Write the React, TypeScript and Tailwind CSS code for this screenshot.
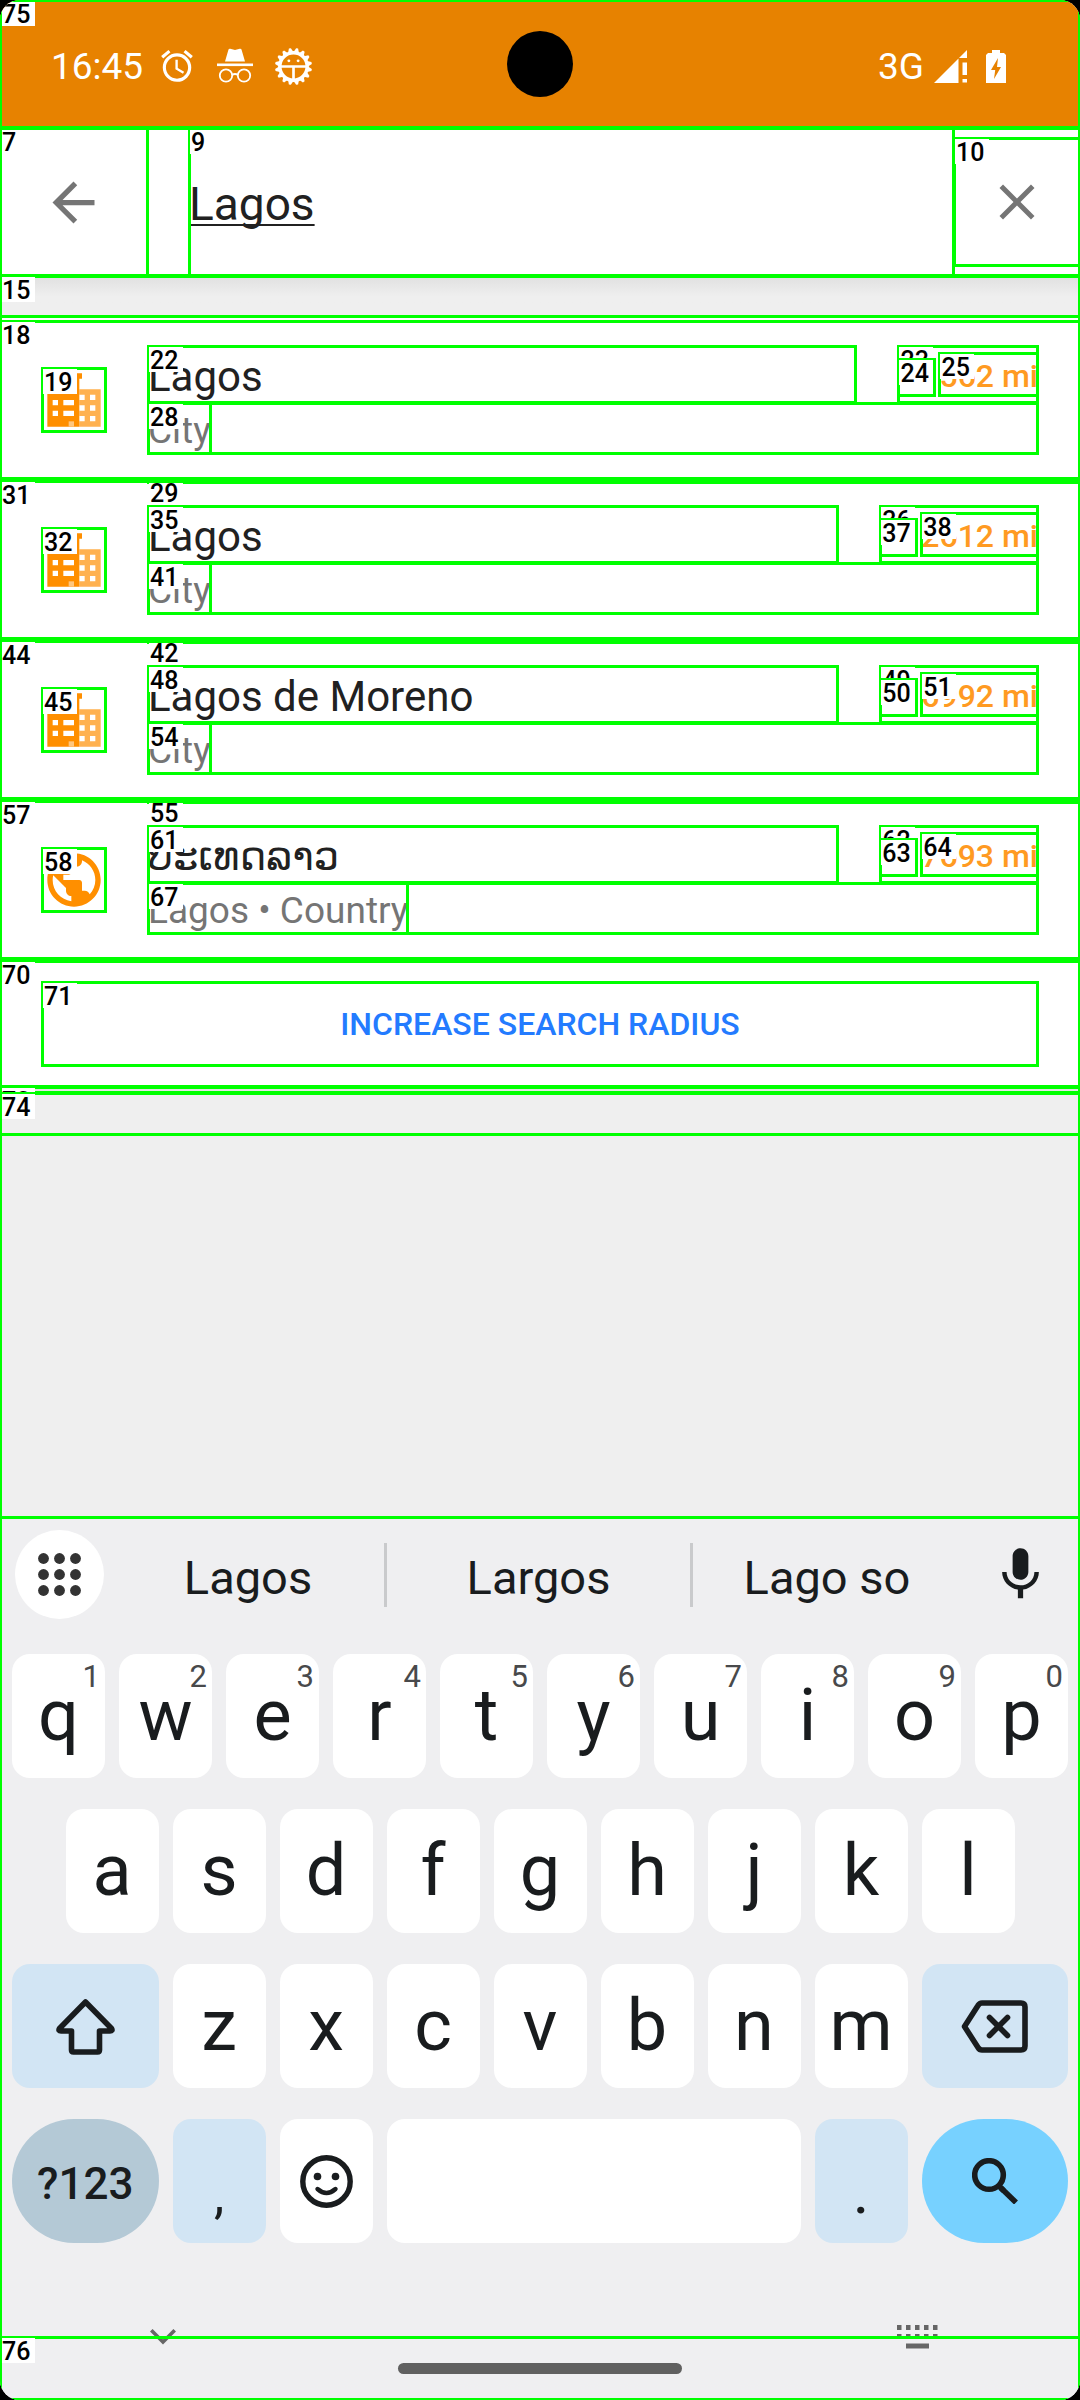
import React from "react";
import { MdAlarm, MdArrowBack, MdClose, MdMic, MdNavigation, MdPublic } from "react-icons/md";

/** Green debug outline over its parent, with an optional element number. */
function Mark({ n }: { n?: number }) {
  return (
    <span aria-hidden="true" className="pointer-events-none absolute -inset-px z-10 border-[3px] border-[#00ff00]">
      {n !== undefined && (
        <span className="absolute -left-px -top-px h-[25px] w-[34px] bg-white pl-px text-left font-[Roboto] text-[25px] font-medium leading-[27px] text-black">
          {n}
        </span>
      )}
    </span>
  );
}

function IncognitoIcon() {
  return (
    <svg width="36" height="36" viewBox="0 0 36 36" fill="#fff" aria-hidden="true">
      <path d="M11.500 1.500Q12 .5 13.200 .8L18 2l4.800-1.200q1.200-.3 1.700.7L28 13.500H8z" />
      <rect y="15.500" width="36" height="2.600" />
      <g fill="none" stroke="#fff" strokeWidth="1.800">
        <circle cx="9" cy="27.500" r="6.200" />
        <circle cx="27" cy="27.500" r="6.200" />
        <path d="M15 27q3-2 6 0" />
      </g>
    </svg>
  );
}

const TEETH = Array.from({ length: 16 }, (_, i) => i * 22.5 + 11.25);

function GearFaceIcon() {
  return (
    <svg width="37" height="37" viewBox="0 0 36 36" aria-hidden="true">
      {TEETH.map((a) => (
        <path key={a} d="M15 5L17 0h2L21 5z" fill="#fff" transform={`rotate(${a} 18 18)`} />
      ))}
      <circle cx="18" cy="18" r="13.300" fill="none" stroke="#fff" strokeWidth="3.400" />
      <path d="M5 18h26M18 18v13" stroke="#fff" strokeWidth="2.600" />
      <circle cx="13.500" cy="12.500" r="1.400" fill="#fff" />
      <circle cx="22.500" cy="12.500" r="1.400" fill="#fff" />
    </svg>
  );
}

function SignalIcon() {
  return (
    <svg width="33" height="33" viewBox="0 0 33 33" fill="#fff" aria-hidden="true">
      <path d="M33 0v8h-8zM24.500 8.500V33H0zM28.500 12.500H33V25h-4.500zM28.500 29H33v3.500h-4.500z" />
    </svg>
  );
}

function BatteryIcon() {
  return (
    <svg width="20" height="33" viewBox="0 0 20 33" aria-hidden="true">
      <path d="M6 0h8v3h4l2 2v28H0V5l2-2h4z" fill="#fff" />
      <path d="M12 8L5 20h4.200L8 29l7-12h-4z" fill="#e78200" />
    </svg>
  );
}

function CityIcon() {
  return (
    <svg className="size-full" viewBox="0 0 24 24" aria-hidden="true">
      <path fill="#ffb14f" fillRule="evenodd" d="M14 8h8v14h-8zM14 10v2h2v-2zM18 10v2h2v-2zM14 14v2h2v-2zM18 14v2h2v-2zM14 18v2h2v-2zM18 18v2h2v-2z" />
      <path fill="#ff8f00" fillRule="evenodd" d="M13 2h2v2h-1v18H2V9h11zM4 12v2h2v-2zM8 12v2h4v-2zM4 16v2h2v-2zM8 16v2h4v-2z" />
      <path fill="#ffc780" d="M10 20h2v2h-2z" />
    </svg>
  );
}

type Result = {
  title: string;
  subtitle: string;
  distance: string;
  country?: boolean;
  marks: number[];
  divider?: number;
};

const RESULTS: Result[] = [
  { title: "Lagos", subtitle: "City", distance: "562 mi", marks: [18, 19, 22, 23, 24, 25, 28], divider: 29 },
  { title: "Lagos", subtitle: "City", distance: "2612 mi", marks: [31, 32, 35, 36, 37, 38, 41], divider: 42 },
  { title: "Lagos de Moreno", subtitle: "City", distance: "6992 mi", marks: [44, 45, 48, 49, 50, 51, 54], divider: 55 },
  { title: "ປະເທດລາວ", subtitle: "Lagos • Country", distance: "7693 mi", country: true, marks: [57, 58, 61, 62, 63, 64, 67] },
];

function ResultRow({ item }: { item: Result }) {
  const m = item.marks;
  return (
    <li>
      <button type="button" className="relative flex w-full items-center px-[42px] py-[25px] text-left">
        <Mark n={m[0]} />
        <span className="relative mr-[42px] size-16 shrink-0">
          {item.country ? <MdPublic className="size-full text-[#ff8f00]" /> : <CityIcon />}
          <Mark n={m[1]} />
        </span>
        <span className="relative flex min-w-0 flex-1 flex-col">
          <span className="flex gap-[42px]">
            <span className="relative min-w-0 flex-1 pt-1 leading-[53px] text-[#212121]">
              <span className={item.country ? "block truncate text-[40px]" : "block truncate text-[42px]"}>{item.title}</span>
              <Mark n={m[2]} />
            </span>
            <span className="relative flex items-center gap-1">
              <Mark n={m[3]} />
              <span className="relative mt-1.5 flex h-[37px] w-[37px] justify-center">
                <MdNavigation className="-mt-0.5 size-[30px] text-[#ff9d26]" />
                <Mark n={m[4]} />
              </span>
              <span className="relative pt-1 text-[32px] font-medium leading-[39px] text-[#ff9a22]">
                {item.distance}
                <Mark n={m[5]} />
              </span>
            </span>
          </span>
          <span className="relative flex">
            <Mark />
            <span className="relative pt-1 text-[37px] leading-[47px] text-[#757575]">
              {item.subtitle}
              <Mark n={m[6]} />
            </span>
          </span>
        </span>
      </button>
      <div className="relative ml-[148px] h-0.5 bg-[#e5e5e5]">{item.divider && <Mark n={item.divider} />}</div>
    </li>
  );
}

const KEY = "relative col-span-2 flex h-[124px] items-center justify-center rounded-[18px] bg-white text-[72px] leading-none";

function Key({ char, hint, start }: { char: string; hint?: string; start?: boolean }) {
  return (
    <button type="button" className={start ? `${KEY} col-start-2` : KEY}>
      {char}
      {hint && <span className="absolute right-[5px] top-[7px] text-[31px] leading-[31px] text-[#48494b]">{hint}</span>}
    </button>
  );
}

function Keyboard() {
  return (
    <section aria-label="Keyboard" className="relative bg-[#efeff1] text-[#191c1e]">
      <div className="grid h-[115px] grid-cols-[112px_275fr_306fr_268fr_119px] items-center text-[47px]">
        <button type="button" aria-label="Keyboard menu" className="ml-[15px] flex size-[89px] items-center justify-center rounded-full bg-white">
          <svg width="43" height="43" viewBox="0 0 43 43" fill="#333" aria-hidden="true">
            {[5.5, 21.5, 37.5].map((y) => [5.5, 21.5, 37.5].map((x) => <circle key={`${x}-${y}`} cx={x} cy={y} r="5.400" />))}
          </svg>
        </button>
        <button type="button" className="h-16 border-r-[3px] border-[#c9cacc] pt-1.5 leading-[56px]">Lagos</button>
        <button type="button" className="h-16 border-r-[3px] border-[#c9cacc] pt-1.5 leading-[56px]">Largos</button>
        <button type="button" className="h-16 pt-1.5 leading-[56px]">Lago so</button>
        <button type="button" aria-label="Voice input" className="flex justify-center">
          <MdMic className="size-[63px]" />
        </button>
      </div>

      <div className="mt-[22px] grid grid-cols-[repeat(20,minmax(0,1fr))] gap-x-[14px] gap-y-[31px] px-3">
        {"qwertyuiop".split("").map((c, i) => (
          <Key key={c} char={c} hint={String((i + 1) % 10)} />
        ))}
        {"asdfghjkl".split("").map((c, i) => (
          <Key key={c} char={c} start={i === 0} />
        ))}
        <button type="button" aria-label="Shift" className="col-span-3 col-start-1 flex h-[124px] items-center justify-center rounded-[18px] bg-[#d2e5f4]">
          <svg width="59" height="57" viewBox="0 0 59 57" fill="none" stroke="#191c1e" strokeWidth="5.600" strokeLinejoin="round" aria-hidden="true">
            <path d="M29.500 4L55.500 30.500Q57 33 54 33H43.500V52Q43.500 54 41.500 54H17.500Q15.500 54 15.500 52V33H5Q2 33 3.500 30.500Z" />
          </svg>
        </button>
        {"zxcvbnm".split("").map((c) => (
          <Key key={c} char={c} />
        ))}
        <button type="button" aria-label="Backspace" className="col-span-3 flex h-[124px] items-center justify-center rounded-[18px] bg-[#d2e5f4]">
          <svg width="67" height="53" viewBox="0 0 67 53" fill="none" stroke="#191c1e" strokeWidth="5.600" strokeLinejoin="round" strokeLinecap="round" aria-hidden="true">
            <path d="M3.500 26.500L17 5.500Q18.500 3 21 3H60Q64 3 64 7V46Q64 50 60 50H21Q18.500 50 17 47.500Z" />
            <path d="M28.500 17.500L46.500 35.500M46.500 17.500L28.500 35.500" />
          </svg>
        </button>
        <button type="button" className="col-span-3 flex h-[124px] items-center justify-center rounded-full bg-[#b4c9d6] pt-1.5 text-[44px] font-medium leading-none">
          ?123
        </button>
        <button type="button" className="col-span-2 flex h-[124px] items-end justify-center rounded-[18px] bg-[#d2e5f4] pb-6 text-[52px] leading-[47px]">
          ,
        </button>
        <button type="button" aria-label="Emoji" className="col-span-2 flex h-[124px] items-center justify-center rounded-[18px] bg-white">
          <svg width="53" height="53" viewBox="0 0 53 53" fill="none" stroke="#191c1e" aria-hidden="true">
            <circle cx="26.500" cy="26.500" r="23.700" strokeWidth="5.400" />
            <circle cx="17.500" cy="21.500" r="3.800" fill="#191c1e" stroke="none" />
            <circle cx="35.500" cy="21.500" r="3.800" fill="#191c1e" stroke="none" />
            <path d="M17.500 34Q26.500 42 35.500 34" strokeWidth="4.400" strokeLinecap="round" />
          </svg>
        </button>
        <button type="button" aria-label="Space" className="col-span-8 h-[124px] rounded-[18px] bg-white" />
        <button type="button" className="col-span-2 flex h-[124px] items-end justify-center rounded-[18px] bg-[#d2e5f4] pb-6 text-[52px] font-medium leading-[47px]">
          .
        </button>
        <button type="button" aria-label="Search" className="col-span-3 flex h-[124px] items-center justify-center rounded-full bg-[#77d1ff]">
          <svg width="46" height="46" viewBox="0 0 46 46" fill="none" stroke="#191c1e" strokeWidth="5.600" aria-hidden="true">
            <circle cx="17" cy="17" r="14.300" />
            <path d="M28.500 29.500L44 44.500" />
            <path d="M29 30L31 32" strokeLinecap="round" />
          </svg>
        </button>
      </div>

      <div className="mt-[78px] flex h-8 items-center justify-between pl-[150px] pr-[142px]">
        <button type="button" aria-label="Hide keyboard">
          <svg width="26" height="16" viewBox="0 0 26 16" fill="none" stroke="#666" strokeWidth="3.600" aria-hidden="true">
            <path d="M1.300 1.300L13 13L24.700 1.300" />
          </svg>
        </button>
        <button type="button" aria-label="Switch keyboard">
          <svg width="41" height="24" viewBox="0 0 41 24" fill="#666" aria-hidden="true">
            {[0, 9, 18, 27, 36].map((x) => (
              <path key={x} d={`M${x} 0h4.500v5h-4.500zM${x} 9h4.500v5h-4.500z`} />
            ))}
            <path d="M9 18.500h23v5H9z" />
          </svg>
        </button>
      </div>
      <div className="mx-auto mt-2.5 h-[11px] w-[284px] rounded-full bg-[#606060]" />
      <div className="h-[26px]" />
      <div className="absolute inset-x-0 bottom-0 h-[63px]">
        <Mark n={76} />
      </div>
      <div className="pointer-events-none absolute inset-x-0 -top-px h-[3px] bg-[#00ff00]" />
    </section>
  );
}

export default function App() {
  return (
    <div className="bg-black font-[Roboto,'Noto_Sans','DejaVu_Sans',sans-serif]">
      <div className="relative flex min-h-screen flex-col overflow-hidden rounded-[20px] bg-[#efefef]">
        <header className="relative flex h-32 items-center justify-between bg-[#e78200] pl-[51px] pr-[74px] pt-1 text-[37px] leading-none text-white">
          <div className="flex items-center">
            <span>16:45</span>
            <MdAlarm className="ml-[15px] size-[38px]" />
            <span className="ml-[21px]"><IncognitoIcon /></span>
            <span className="ml-[22px]"><GearFaceIcon /></span>
          </div>
          <span className="absolute left-1/2 top-[31px] size-[66px] -translate-x-1/2 rounded-full bg-black" />
          <div className="flex items-center">
            <span className="mr-[10px]">3G</span>
            <SignalIcon />
            <span className="ml-[19px]"><BatteryIcon /></span>
          </div>
          <Mark n={75} />
        </header>

        <div className="relative flex h-[148px] bg-white text-[#757575]">
          <button type="button" aria-label="Back" className="relative flex w-[148px] items-center pl-[42px]">
            <MdArrowBack className="size-[63px]" />
            <Mark n={7} />
          </button>
          <label className="relative ml-[41px] flex min-w-0 flex-1">
            <input
              type="text"
              aria-label="Search"
              defaultValue="Lagos"
              className="w-full bg-transparent pt-1 text-[46px] text-[#212121] underline decoration-2 underline-offset-4 outline-none [text-decoration-skip-ink:none]"
            />
            <Mark n={9} />
          </label>
          <button type="button" aria-label="Clear" className="relative my-[10px] flex w-[126px] items-center justify-center">
            <MdClose className="size-[60px]" />
            <Mark n={10} />
          </button>
          <Mark />
        </div>

        <div className="relative h-[41px] bg-linear-to-b from-[#e0e0e0] to-[#efefef] to-50%">
          <Mark n={15} />
        </div>

        <main className="bg-white pt-1">
          <ul>
            {RESULTS.map((r) => (
              <ResultRow key={r.marks[0]} item={r} />
            ))}
          </ul>
          <div className="relative px-[42px] py-[21px]">
            <button type="button" className="relative h-[84px] w-full text-[32px] font-medium text-[#237bff]">
              INCREASE SEARCH RADIUS
              <Mark n={71} />
            </button>
            <Mark n={70} />
          </div>
        </main>
        <div className="relative h-1.5 bg-linear-to-b from-[#d8d8d8] to-[#efefef]">
          <Mark n={73} />
        </div>
        <div className="relative h-[42px]">
          <Mark n={74} />
        </div>
        <div className="flex-1" />
        <Keyboard />
        <div className="pointer-events-none absolute inset-0">
          <Mark />
        </div>
      </div>
    </div>
  );
}
